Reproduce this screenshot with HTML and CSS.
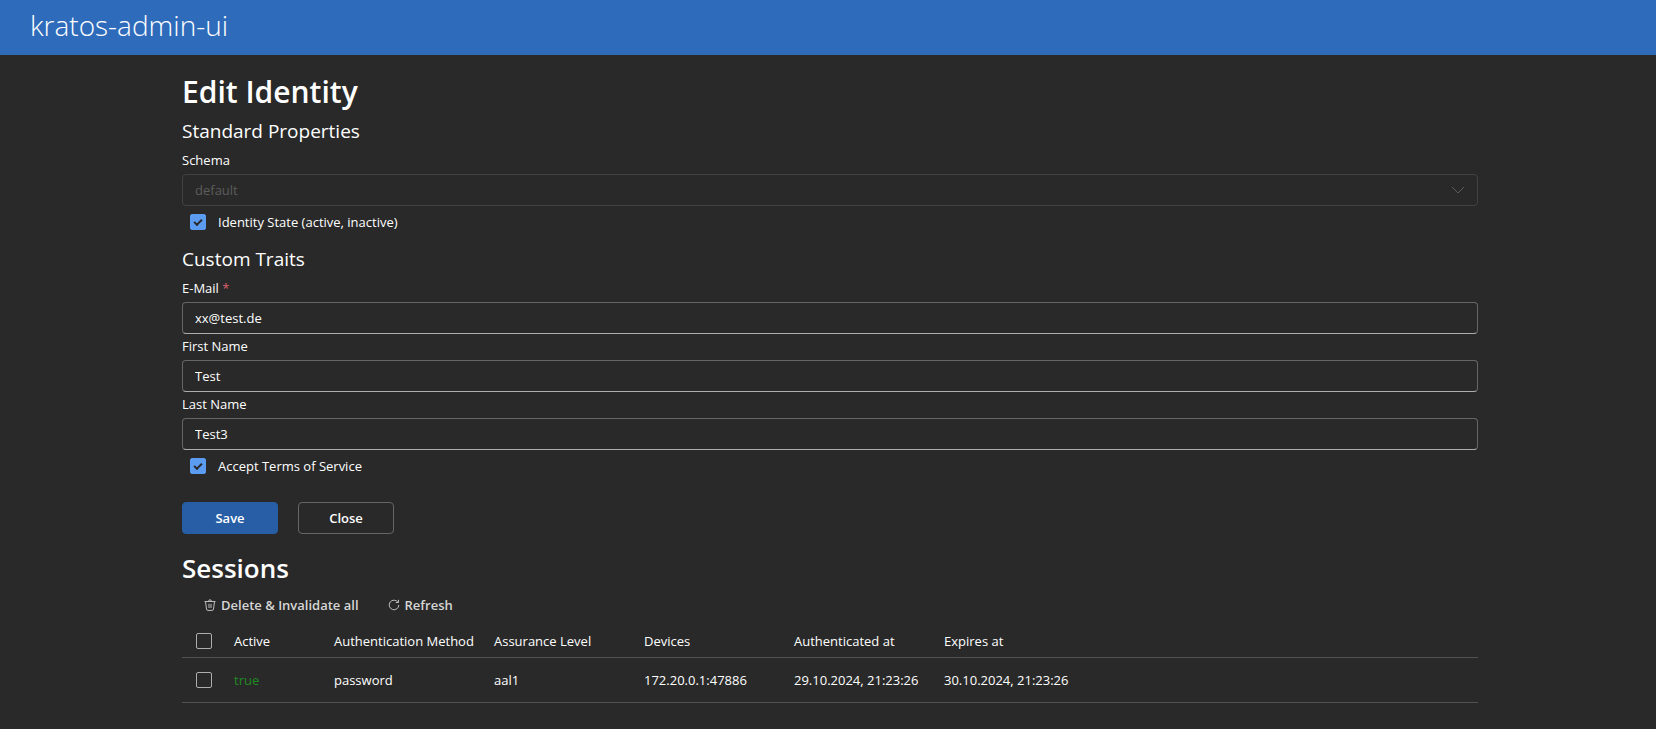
FILE: index.html
```html
<!DOCTYPE html>
<html lang="en">
<head>
<meta charset="utf-8">
<title>kratos-admin-ui</title>
<link rel="stylesheet" href="styles.css">
</head>
<body>
<header class="topbar"><span class="brand">kratos-admin-ui</span></header>
<main class="content">
  <h1 class="title">Edit Identity</h1>
  <form class="form">
    <h2 class="section">Standard Properties</h2>
    <div class="field">
      <label class="label" for="schema">Schema</label>
      <div class="select-wrap">
        <select class="control select" id="schema" disabled><option>default</option></select>
        <svg class="chevron" viewBox="0 0 20 20" aria-hidden="true"><path d="M4 7l6 6 6-6"/></svg>
      </div>
    </div>
    <div class="check-row">
      <input class="checkbox" type="checkbox" id="state" checked>
      <label for="state">Identity State (active, inactive)</label>
    </div>
    <h2 class="section section-next">Custom Traits</h2>
    <div class="field">
      <label class="label" for="email">E-Mail <span class="required">*</span></label>
      <input class="control" type="text" id="email" value="xx@test.de">
    </div>
    <div class="field">
      <label class="label" for="first">First Name</label>
      <input class="control" type="text" id="first" value="Test">
    </div>
    <div class="field">
      <label class="label" for="last">Last Name</label>
      <input class="control" type="text" id="last" value="Test3">
    </div>
    <div class="check-row">
      <input class="checkbox" type="checkbox" id="tos" checked>
      <label for="tos">Accept Terms of Service</label>
    </div>
    <div class="actions">
      <button class="button primary" type="button">Save</button>
      <button class="button" type="button">Close</button>
    </div>
  </form>
  <h2 class="subtitle">Sessions</h2>
  <div class="toolbar">
    <button class="tool" type="button">
      <svg class="tool-icon" viewBox="0 0 12 12" aria-hidden="true"><path d="M.5 2.5h11M4.5 2.3a1.5 1.5 0 0 1 3 0M1.5 2.5l1 7.6a1.4 1.4 0 0 0 1.4 1.3h4.2a1.4 1.4 0 0 0 1.4-1.3l1-7.6M5 4.8v4.2M7 4.8v4.2"/></svg>
      Delete &amp; Invalidate all
    </button>
    <button class="tool" type="button">
      <svg class="tool-icon" viewBox="0 0 12 12" aria-hidden="true"><path d="M10 3.3A4.8 4.8 0 1 0 10.8 6M10.5 .8v2.7H7.8"/></svg>
      Refresh
    </button>
  </div>
  <table class="grid">
    <colgroup><col class="c-check"><col class="c-active"><col class="c-method"><col class="c-mid"><col class="c-mid"><col class="c-mid"><col></colgroup>
    <thead>
      <tr>
        <th><input class="checkbox" type="checkbox" aria-label="Select all sessions"></th>
        <th>Active</th><th>Authentication Method</th><th>Assurance Level</th><th>Devices</th><th>Authenticated at</th><th>Expires at</th>
      </tr>
    </thead>
    <tbody>
      <tr>
        <td><input class="checkbox" type="checkbox" aria-label="Select session"></td>
        <td class="ok">true</td><td>password</td><td>aal1</td><td>172.20.0.1:47886</td><td>29.10.2024, 21:23:26</td><td>30.10.2024, 21:23:26</td>
      </tr>
    </tbody>
  </table>
</main>
</body>
</html>
```
FILE: styles.css
```css
*, *::before { box-sizing: border-box; }

body {
  margin: 0;
  background: #292929;
  color: #fff;
  font: 13px/20px "Segoe UI", "Open Sans", "Noto Sans", sans-serif;
}

.topbar {
  display: flex;
  align-items: center;
  height: 55px;
  padding: 0 30px 6px;
  background: #2e6bbb;
}

.brand { font-size: 28px; line-height: 36px; font-weight: 300; }

.content { padding: 17px 178px 24px 182px; }

.title { margin: 0; font-size: 30px; line-height: 40px; font-weight: 600; }

.section {
  margin: 0;
  padding: 5px 0 3px;
  font-size: 19px;
  line-height: 28px;
  font-weight: 400;
}

.section-next { padding-top: 7px; }

.field { display: flex; flex-direction: column; }

.label { padding: 2px 0 4px; }

.required { color: #dc626d; }

.control {
  width: 100%;
  height: 32px;
  padding: 0 12px;
  border: 1px solid #666;
  border-bottom-color: #adadad;
  border-radius: 4px;
  background: #292929;
  color: #fff;
  font: inherit;
}

.select-wrap { display: grid; align-items: center; }

.select-wrap > * { grid-area: 1 / 1; }

.select {
  appearance: none;
  border-color: #424242;
  color: #5c5c5c;
  opacity: 1;
}

.chevron {
  justify-self: end;
  width: 20px;
  height: 20px;
  margin-right: 10px;
  fill: none;
  stroke: #5c5c5c;
  pointer-events: none;
}

.check-row {
  display: flex;
  align-items: center;
  gap: 12px;
  height: 32px;
  padding-left: 8px;
}

.checkbox {
  appearance: none;
  display: grid;
  place-items: center;
  width: 16px;
  height: 16px;
  margin: 0;
  border: 1px solid #adadad;
  border-radius: 2px;
}

.checkbox:checked { border-color: #5b9bf0; background: #5b9bf0; }

.checkbox:checked::before {
  content: "";
  width: 8px;
  height: 5px;
  margin-bottom: 2px;
  border: solid #292929;
  border-width: 0 0 2px 2px;
  transform: rotate(-45deg);
}

.actions { display: flex; gap: 20px; padding: 20px 0 16px; }

.button {
  width: 96px;
  height: 32px;
  border: 1px solid #666;
  border-radius: 4px;
  background: transparent;
  color: #fff;
  font: inherit;
  font-weight: 600;
}

.primary { border-color: #285ea5; background: #285ea5; }

.subtitle { margin: 0; font-size: 26px; line-height: 36px; font-weight: 600; }

.toolbar { display: flex; gap: 5px; padding: 3px 10px 4px; }

.tool {
  display: flex;
  align-items: center;
  gap: 5px;
  height: 32px;
  padding: 0 12px;
  border: 0;
  background: transparent;
  color: #d6d6d6;
  font: inherit;
  font-weight: 600;
}

.tool-icon {
  width: 12px;
  height: 12px;
  fill: none;
  stroke: #bdbdbd;
}

.grid { width: 100%; border-collapse: collapse; table-layout: fixed; }

.grid th, .grid td {
  height: 45px;
  padding: 0 8px 0 0;
  border-bottom: 1px solid #525252;
  font-weight: 400;
  text-align: left;
  white-space: nowrap;
}

.grid th { height: 32px; }

.grid .checkbox { margin-left: 14px; }

.c-check { width: 52px; }
.c-active { width: 100px; }
.c-method { width: 160px; }
.c-mid { width: 150px; }

.grid .ok { color: #218c21; }
```
